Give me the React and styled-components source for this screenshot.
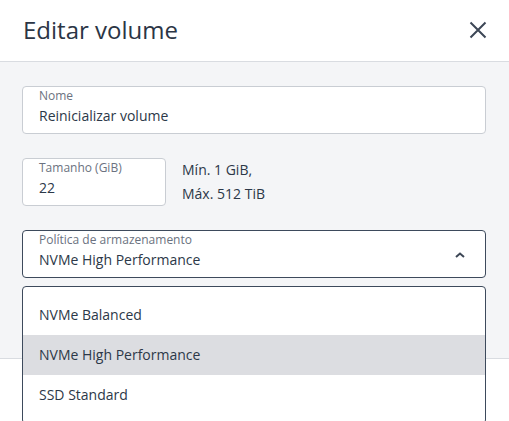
import styled, { createGlobalStyle } from "styled-components";
import { useState } from "react";

const GlobalStyle = createGlobalStyle`
    * { box-sizing: border-box; }
    body {
        margin: 0;
        background: #fff;
        font-family: "Open Sans", "Noto Sans", sans-serif;
        color: #2c3848;
    }
`

const policies = ['NVMe Balanced', 'NVMe High Performance', 'SSD Standard']

const EditVolume = () => {
    const [policy, setPolicy] = useState('NVMe High Performance')
    const [open, setOpen] = useState(true)

    return (
        <Modal>
            <GlobalStyle />
            <Header>
                <Title>Editar volume</Title>
                <Close aria-label="Fechar">
                    <svg width="18" height="18" viewBox="0 0 18 18">
                        <path d="M1.5 1.5L16.5 16.5M16.5 1.5L1.5 16.5" stroke="#3d4756" strokeWidth="2" fill="none" />
                    </svg>
                </Close>
            </Header>
            <Body>
                <Field>
                    <Label>Nome</Label>
                    <Value>Reinicializar volume</Value>
                </Field>
                <SizeRow>
                    <Field $width="144px">
                        <Label>Tamanho (GiB)</Label>
                        <Value>22</Value>
                    </Field>
                    <Hint>
                        <div>Mín. 1 GiB,</div>
                        <div>Máx. 512 TiB</div>
                    </Hint>
                </SizeRow>
                <SelectWrap>
                    <Field $active onClick={() => setOpen(!open)}>
                        <Label>Política de armazenamento</Label>
                        <Value>{policy}</Value>
                        <Chevron width="10" height="6" viewBox="0 0 10 6">
                            <path d="M1 5L5 1.5L9 5" stroke="#3d4756" strokeWidth="2" fill="none" />
                        </Chevron>
                    </Field>
                    {open &&
                        <Menu>
                            {policies.map(p => (
                                <Option
                                    key={p}
                                    $selected={p === policy}
                                    onClick={() => { setPolicy(p); setOpen(false) }}
                                >{p}</Option>
                            ))}
                        </Menu>
                    }
                </SelectWrap>
            </Body>
            <Footer />
        </Modal>
    );
}

const Modal = styled.div`
    width: 509px;
    height: 421px;
    overflow: hidden;
    background: #fff;
`
const Header = styled.div`
    height: 62px;
    display: flex;
    align-items: center;
    justify-content: space-between;
    padding: 0 22px 2px 23px;
    border-bottom: 1px solid #d9dce1;
`
const Title = styled.h1`
    margin: 0;
    font-size: 24px;
    font-weight: 400;
    color: #2b3545;
`
const Close = styled.button`
    border: 0;
    background: none;
    padding: 0;
    display: flex;
    cursor: pointer;
`
const Body = styled.div`
    background: #f4f5f7;
    padding: 24px 23px 80px 22px;
    display: flex;
    flex-direction: column;
    gap: 24px;
    border-bottom: 1px solid #d9dce1;
`
const Field = styled.div`
    position: relative;
    width: ${props => props.$width || '100%'};
    height: 48px;
    padding: 1px 16px 0;
    background: #fff;
    border: 1px solid ${props => props.$active ? '#3d4a5c' : '#c9cdd3'};
    border-radius: 4px;
    cursor: ${props => props.$active ? 'pointer' : 'text'};
`
const Label = styled.div`
    font-size: 12px;
    line-height: 16px;
    color: #6b7280;
`
const Value = styled.div`
    margin-top: 2px;
    font-size: 14px;
    line-height: 20px;
    color: #2c3848;
`
const SizeRow = styled.div`
    display: flex;
    gap: 16px;
`
const Hint = styled.div`
    font-size: 14px;
    line-height: 24px;
    color: #2c3848;
`
const SelectWrap = styled.div`
    position: relative;
`
const Chevron = styled.svg`
    position: absolute;
    right: 20px;
    top: 21px;
`
const Menu = styled.div`
    position: absolute;
    top: 56px;
    left: 0;
    right: 0;
    padding: 8px 0;
    background: #fff;
    border: 1px solid #3d4a5c;
    border-radius: 4px;
    z-index: 2;
`
const Option = styled.div`
    height: 40px;
    display: flex;
    align-items: center;
    padding: 0 16px 2px;
    font-size: 14px;
    color: #2c3848;
    background: ${props => props.$selected ? '#dcdde1' : '#fff'};
    cursor: pointer;
`
const Footer = styled.div`
    height: 80px;
    background: #fff;
`

export default EditVolume;
